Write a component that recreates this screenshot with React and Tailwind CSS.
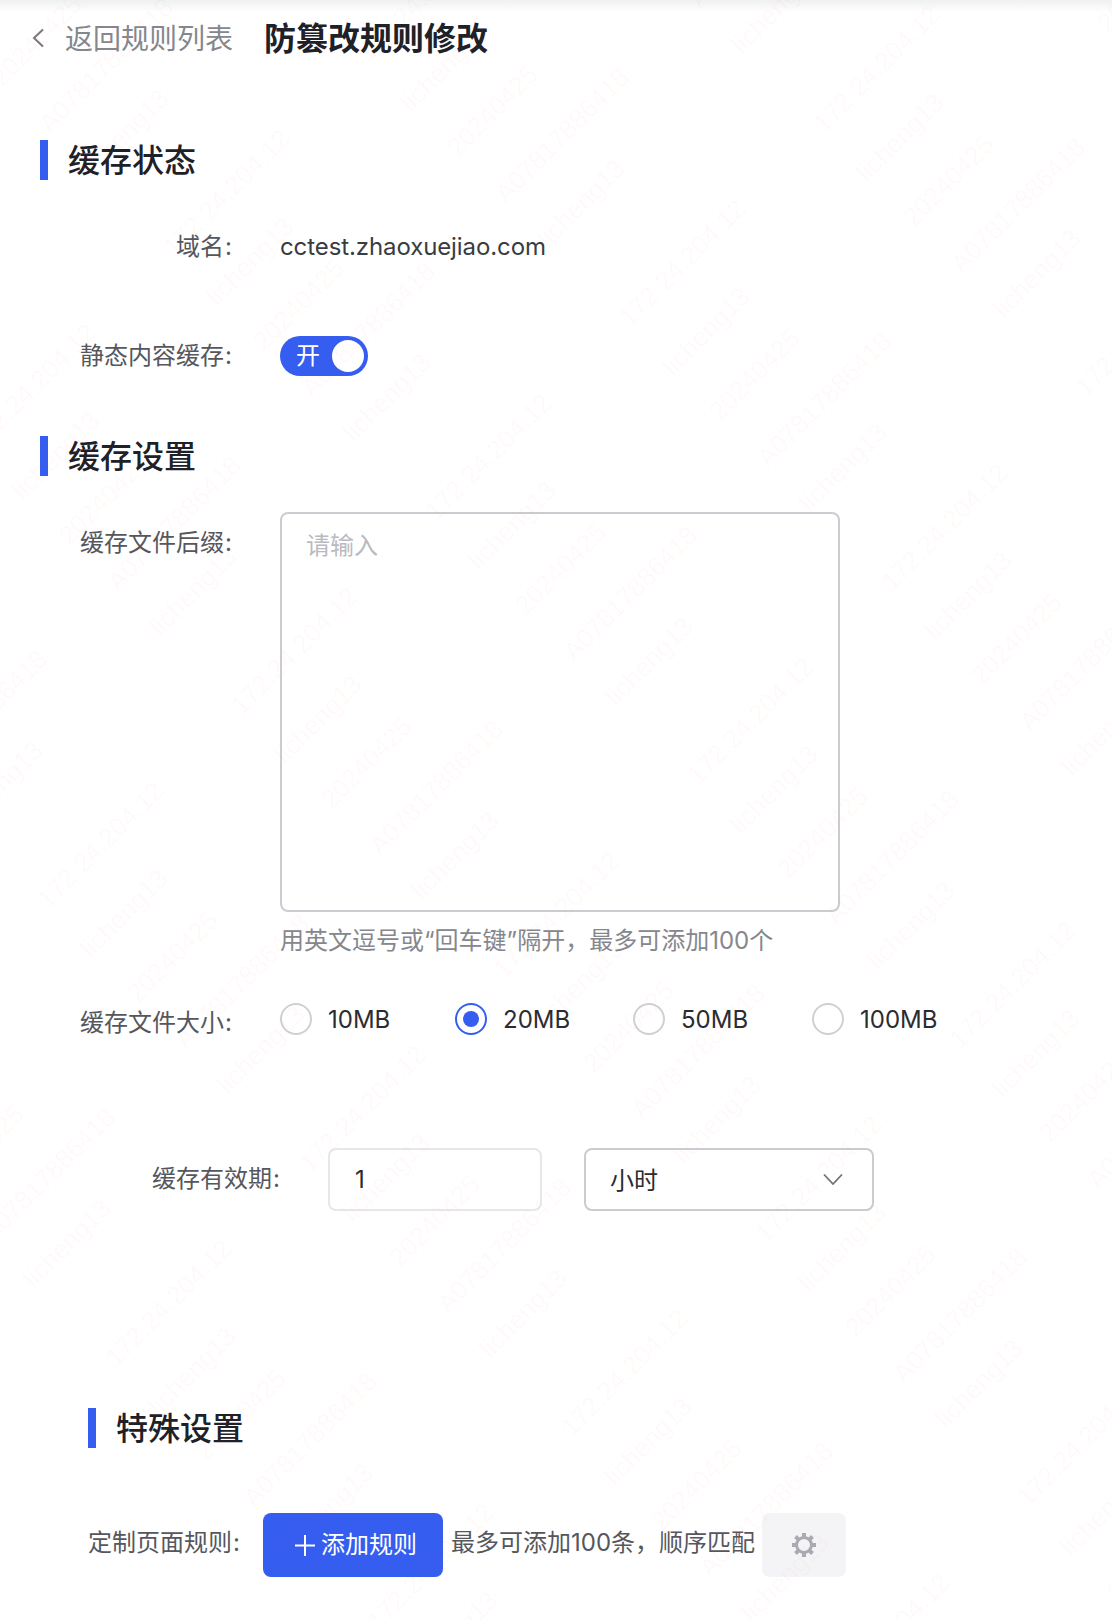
const FONT = "font-['Inter','Noto_Sans_CJK_SC',sans-serif]"

// ─── Watermark ──────────────────────────────────────────────────────────────
const MARK_LINES = [
  ['172.24.204.12', 0, 0],
  ['licheng13', 43, 49],
  ['20240425', 90, 94],
  ['A07817886418', 138, 140],
  ['licheng13', 180, 185],
]

function Watermark() {
  const marks = []
  for (let i = -5; i <= 5; i++) {
    for (let j = -5; j <= 5; j++) {
      const bx = 826 - 194 * i + 262 * j
      const by = 136 + 194 * i + 264 * j
      MARK_LINES.forEach(([text, dx, dy], k) => {
        const x = bx + dx
        const y = by + dy
        if (x < -200 || x > 1150 || y < -20 || y > 1800) return
        marks.push({ key: `${i}-${j}-${k}`, text, x, y })
      })
    }
  }
  return (
    <div className="absolute inset-0 overflow-hidden pointer-events-none">
      {marks.map((m) => (
        <span
          key={m.key}
          className="absolute origin-bottom-left -rotate-45 whitespace-nowrap text-[26px] leading-[24px] font-['Liberation_Sans',sans-serif] text-[#ff4d4d]/4"
          style={{ left: m.x, top: m.y - 24 }}
        >
          {m.text}
        </span>
      ))}
    </div>
  )
}

// ─── Small parts ────────────────────────────────────────────────────────────
function SectionTitle({ children, className = '' }) {
  return (
    <div className={`flex items-center ${className}`}>
      <div className="w-2 h-10 bg-[#355df0]" />
      <h2 className="ml-5 h-10 text-[32px] leading-[42px] font-medium text-[#1e2127]">{children}</h2>
    </div>
  )
}

function Label({ children, width = 'w-[233px]', className = '' }) {
  return (
    <div className={`${width} shrink-0 whitespace-nowrap text-right text-[24px] leading-8 text-[#55575d] ${className}`}>
      {children}<span className="inline-block w-[9px] text-center">:</span>
    </div>
  )
}

function Radio({ label, checked }) {
  return (
    <div className="flex items-center gap-4">
      <span className={`w-8 h-8 rounded-full border-2 flex items-center justify-center ${checked ? 'border-[#355df0]' : 'border-[#cfd0d5]'}`}>
        {checked && <span className="w-4 h-4 rounded-full bg-[#355df0]" />}
      </span>
      <span className="h-8 text-[24px] leading-[34px] text-[#2a2c32]">{label}</span>
    </div>
  )
}

function GearIcon() {
  return (
    <svg width="26" height="26" viewBox="0 0 26 26" fill="none">
      <circle cx="13" cy="13" r="7.5" stroke="#a9abb1" strokeWidth="3" />
      {[0, 45, 90, 135, 180, 225, 270, 315].map((a) => (
        <rect key={a} x="11" y="1" width="4" height="4.5" fill="#a9abb1" transform={`rotate(${a} 13 13)`} />
      ))}
    </svg>
  )
}

// ─── Page ───────────────────────────────────────────────────────────────────
export default function App() {
  return (
    <div className={`relative h-[1620px] w-full overflow-hidden bg-white ${FONT}`}>
      <div className="h-3 bg-gradient-to-b from-[#eff0f0] to-white" />

      {/* header */}
      <div className="flex items-center h-[52px] pl-8">
        <svg width="12" height="20" viewBox="0 0 12 20" fill="none">
          <path d="M11 1.5 2 10l9 8.5" stroke="#77797f" strokeWidth="2" />
        </svg>
        <span className="ml-[21px] h-10 text-[28px] leading-[42px] text-[#85878d]">返回规则列表</span>
        <h1 className="ml-[31px] h-10 text-[32px] leading-[42px] font-semibold text-[#1e2127]">防篡改规则修改</h1>
      </div>

      <div className="ml-10 mt-[76px]">
        <SectionTitle>缓存状态</SectionTitle>
      </div>

      <div className="flex items-center h-10 mt-[47px]">
        <Label>域名</Label>
        <span className="ml-[47px] text-[24px] leading-8 tracking-[-0.1px] text-[#3a3c42]">cctest.zhaoxuejiao.com</span>
      </div>

      <div className="flex items-center h-10 mt-[69px]">
        <Label>静态内容缓存</Label>
        <div className="ml-[47px] flex items-center w-[88px] h-10 rounded-full bg-[#355df0] pl-4 pr-1">
          <span className="text-[24px] leading-8 text-white">开</span>
          <span className="ml-auto w-8 h-8 rounded-full bg-white" />
        </div>
      </div>

      <div className="ml-10 mt-[60px]">
        <SectionTitle>缓存设置</SectionTitle>
      </div>

      <div className="flex mt-9">
        <Label className="pt-[15px]">缓存文件后缀</Label>
        <textarea
          placeholder="请输入"
          className="ml-[47px] w-[560px] h-[400px] resize-none rounded-lg border-2 border-[#cbccd1] px-[24px] py-4 text-[24px] leading-8 outline-none placeholder:text-[#b9bac0]"
        />
      </div>
      <div className="ml-[280px] mt-3 h-[34px] text-[24px] leading-[34px] text-[#85878d]">{'用英文逗号或“回车键”隔开\uFF0C最多可添加100个'}</div>

      <div className="flex mt-[45px] h-8">
        <Label className="mt-1">缓存文件大小</Label>
        <div className="ml-[47px] grid grid-cols-[175px_178px_179px_auto]">
          <Radio label="10MB" />
          <Radio label="20MB" checked />
          <Radio label="50MB" />
          <Radio label="100MB" />
        </div>
      </div>

      <div className="flex items-center h-[63px] mt-[113px]">
        <Label width="w-[281px]" className="-mt-[2px]">缓存有效期</Label>
        <input
          readOnly
          value="1"
          className="ml-[47px] w-[214px] h-[63px] rounded-lg border-2 border-[#e6e7ea] pl-[25px] pr-6 text-[24px] text-[#2a2c32] outline-none"
        />
        <div className="ml-[42px] flex items-center w-[290px] h-[63px] rounded-lg border-2 border-[#cbccd1] pl-6 pr-[29px]">
          <span className="h-8 text-[24px] leading-[34px] text-[#2a2c32]">小时</span>
          <svg className="ml-auto" width="20" height="13" viewBox="0 0 20 13" fill="none">
            <path d="M1 1.5 10 11l9-9.5" stroke="#6f7177" strokeWidth="1.8" />
          </svg>
        </div>
      </div>

      <div className="ml-[88px] mt-[197px]">
        <SectionTitle>特殊设置</SectionTitle>
      </div>

      <div className="flex items-center mt-[65px] ml-[88px] h-16">
        <Label width="w-[153px]" className="-mt-1">定制页面规则</Label>
        <button className="ml-[22px] flex items-center gap-[6px] w-[180px] h-16 rounded-lg bg-[#355df0] pl-8 text-[24px] text-white">
          <svg width="20" height="21" viewBox="0 0 20 21" fill="none">
            <path d="M10 0v21M0 10.5h20" stroke="#fff" strokeWidth="2" />
          </svg>
          添加规则
        </button>
        <span className="ml-2 -mt-1 w-[303px] text-[24px] leading-8 text-[#55575d] whitespace-nowrap">{'最多可添加100条\uFF0C顺序匹配'}</span>
        <div className="ml-2 flex items-center justify-center w-[84px] h-16 rounded-lg bg-[#f4f4f6]">
          <GearIcon />
        </div>
      </div>

      <Watermark />
    </div>
  )
}
